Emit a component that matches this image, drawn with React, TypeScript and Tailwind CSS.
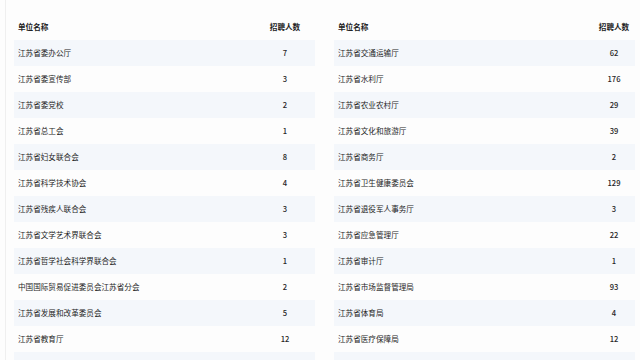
import React from "react";

const left: [string, string][] = [
  ["江苏省委办公厅", "7"],
  ["江苏省委宣传部", "3"],
  ["江苏省委党校", "2"],
  ["江苏省总工会", "1"],
  ["江苏省妇女联合会", "8"],
  ["江苏省科学技术协会", "4"],
  ["江苏省残疾人联合会", "3"],
  ["江苏省文学艺术界联合会", "3"],
  ["江苏省哲学社会科学界联合会", "1"],
  ["中国国际贸易促进委员会江苏省分会", "2"],
  ["江苏省发展和改革委员会", "5"],
  ["江苏省教育厅", "12"],
  ["", ""],
];

const right: [string, string][] = [
  ["江苏省交通运输厅", "62"],
  ["江苏省水利厅", "176"],
  ["江苏省农业农村厅", "29"],
  ["江苏省文化和旅游厅", "39"],
  ["江苏省商务厅", "2"],
  ["江苏省卫生健康委员会", "129"],
  ["江苏省退役军人事务厅", "3"],
  ["江苏省应急管理厅", "22"],
  ["江苏省审计厅", "1"],
  ["江苏省市场监督管理局", "93"],
  ["江苏省体育局", "4"],
  ["江苏省医疗保障局", "12"],
  ["", ""],
];

function Table({ rows, side }: { rows: [string, string][]; side: "l" | "r" }) {
  const numCls =
    side === "l"
      ? "w-[40px] mr-[10px] text-center shrink-0"
      : "w-[40px] mr-[1px] text-center shrink-0";
  return (
    <div className="w-[301px] shrink-0 flex flex-col">
      <div className="h-[26px] shrink-0 flex items-center justify-between pl-[4px] font-bold text-[#222]">
        <span>单位名称</span>
        <span className={numCls}>招聘人数</span>
      </div>
      {rows.map(([n, v], i) => (
        <div
          key={i}
          className={
            "h-[26px] shrink-0 flex items-center justify-between pl-[4px] text-[#262626] " +
            (i % 2 === 0 ? "bg-[#f4f7fb]" : "bg-transparent")
          }
        >
          <span>{n}</span>
          <span className={numCls + " font-medium"}>{v}</span>
        </div>
      ))}
    </div>
  );
}

export default function App() {
  return (
    <div
      className="w-[640px] h-[360px] overflow-hidden bg-[#fdfdfd] pl-[5px] text-[7.6px] leading-none"
      style={{ fontFamily: '"Noto Sans CJK SC", "Noto Sans", sans-serif' }}
    >
      <div className="h-full border-l border-[#efefef] pl-[8px] pt-[14px] flex items-start gap-[19px]">
        <Table rows={left} side="l" />
        <Table rows={right} side="r" />
      </div>
    </div>
  );
}
